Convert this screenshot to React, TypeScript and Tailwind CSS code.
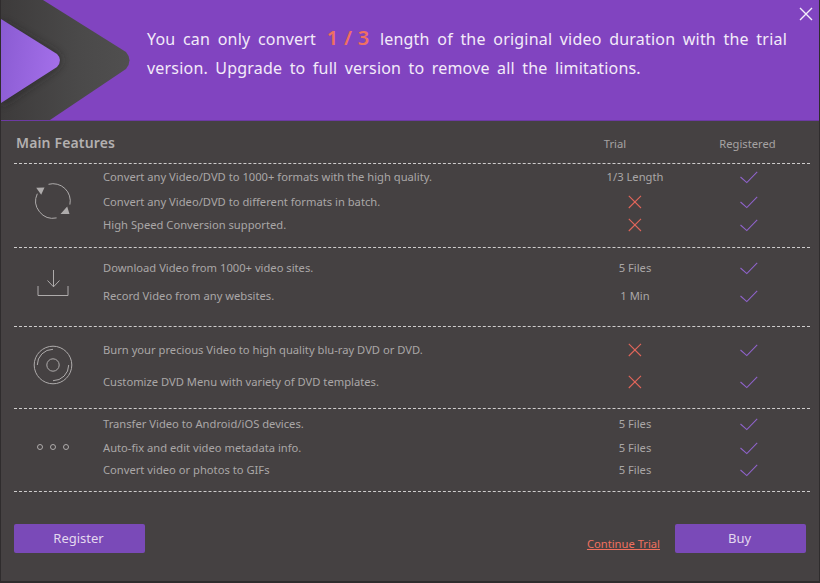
import React from "react";

const Check = () => (
  <svg width="18" height="13" viewBox="0 0 18 13" fill="none" className="block mt-[1px]">
    <path d="M0.5 6 L6.8 11.6 L17.2 0.8" stroke="#8f63cb" strokeWidth="1.1" />
  </svg>
);

const Cross = () => (
  <svg width="14" height="14" viewBox="0 0 14 14" fill="none" className="block">
    <path d="M0.8 0.8 L13 13 M13 0.8 L0.8 13" stroke="#e0655a" strokeWidth="1.1" />
  </svg>
);

const RefreshIcon = () => (
  <svg width="38" height="38" viewBox="0 0 38 38" fill="none" className="block">
    <path d="M14.5 2.3 A17.3 17.3 0 0 1 35.9 22.6 M3.3 11.7 A17.3 17.3 0 0 0 22.6 35.9" stroke="#aeabab" strokeWidth="1" />
    <path d="M2.2 5.7 L10.5 5.4 L7.2 12.7 Z M26.5 32 L35.5 32 L33.2 24.4 Z" fill="#aeabab" />
  </svg>
);

const DownloadIcon = () => (
  <svg width="32" height="27" viewBox="0 0 32 27" fill="none" className="block">
    <path d="M1 16 V25.5 H31 V16 M16.5 0 V17 M10.5 10.5 L16.5 16.8 L22.5 10.5" stroke="#aeabab" strokeWidth="1" />
  </svg>
);

const DiscIcon = () => (
  <svg width="40" height="40" viewBox="0 0 40 40" fill="none" className="block">
    <circle cx="20" cy="20" r="18.8" stroke="#aeabab" strokeWidth="1" />
    <circle cx="20" cy="20" r="6.2" stroke="#aeabab" strokeWidth="1" />
    <path d="M4.3 20 A15.7 15.7 0 0 1 20 4.3 M35.7 20 A15.7 15.7 0 0 1 20 35.7" stroke="#aeabab" strokeWidth="1" />
  </svg>
);

const DotsIcon = () => (
  <svg width="34" height="8" viewBox="0 0 34 8" fill="none" className="block">
    <circle cx="4" cy="4" r="2.5" stroke="#aeabab" strokeWidth="1" />
    <circle cx="17" cy="4" r="2.5" stroke="#aeabab" strokeWidth="1" />
    <circle cx="30" cy="4" r="2.5" stroke="#aeabab" strokeWidth="1" />
  </svg>
);

const Logo = () => (
  <svg width="131" height="120" viewBox="0 0 131 120" fill="none" className="block shrink-0">
    <defs>
      <linearGradient id="inner" x1="0" y1="0" x2="1" y2="0.2">
        <stop offset="0" stopColor="#8a5bd2" />
        <stop offset="1" stopColor="#a26ee8" />
      </linearGradient>
      <linearGradient id="plate" x1="0" y1="0" x2="1" y2="0">
        <stop offset="0" stopColor="#3d3b3b" />
        <stop offset="0.6" stopColor="#4a4949" />
        <stop offset="1" stopColor="#504f4f" />
      </linearGradient>
      <filter id="sh" x="-30%" y="-30%" width="170%" height="170%">
        <feGaussianBlur stdDeviation="5" />
      </filter>
    </defs>
    <path d="M0 0 H42 L125 52 Q132 60 125 69 L49 120 H0 Z" fill="url(#plate)" />
    <path d="M0 22 L56 54 Q62 60 56 67 L0 105 Z" fill="#222" opacity="0.7" filter="url(#sh)" />
    <path d="M0 19 L56 54 Q62 60 56 67 L0 103 Z" fill="url(#inner)" />
  </svg>
);

type Row = { h: string; text: string; trial: React.ReactNode };

const Label = ({ children }: { children: React.ReactNode }) => (
  <span className="block text-[11.2px] leading-none text-[#aaa7a7]">{children}</span>
);

const Section = ({
  icon,
  iconClass,
  heightClass,
  topClass,
  rows,
}: {
  icon: React.ReactNode;
  iconClass: string;
  heightClass: string;
  topClass: string;
  rows: Row[];
}) => (
  <div className={`flex border-b border-dashed border-[#cfcdcd] ${heightClass}`}>
    <div className={`w-[89px] shrink-0 flex justify-center items-center pr-[11px] ${iconClass}`}>{icon}</div>
    <div className={`flex-1 flex flex-col ${topClass}`}>
      {rows.map((r) => (
        <div key={r.text} className={`flex items-center ${r.h}`}>
          <div className="flex-1">
            <Label>{r.text}</Label>
          </div>
          <div className="w-[130px] flex justify-center">{r.trial}</div>
          <div className="w-[110px] pr-[12px] flex justify-center">
            <Check />
          </div>
        </div>
      ))}
    </div>
  </div>
);

export default function App() {
  return (
    <div
      className="w-[820px] h-[583px] flex flex-col bg-[#454142] border-x border-b-2 border-[#2f2c2d] relative overflow-hidden"
      style={{ fontFamily: '"Noto Sans", sans-serif' }}
    >
      <header className="h-[120px] shrink-0 bg-[#8144c0] flex border-b border-[#6d3aa3] box-content">
        <Logo />
        <p className="w-[640px] ml-[15px] mt-[23px] text-[16px] leading-[29px] text-[#f3ebf9] text-justify [word-spacing:3px] tracking-[0.2px]">
          You can only convert{" "}
          <span className="text-[20px] leading-[29px] font-semibold text-[#f0705f] mx-[3px] [word-spacing:0px]">1 / 3</span>{" "}
          length of the original video duration with the trial version. Upgrade to full version to remove all the limitations.
        </p>
      </header>
      <button className="absolute right-[6px] top-[7px]">
        <svg width="14" height="14" viewBox="0 0 14 14" fill="none" className="block">
          <path d="M1 1 L13 13 M13 1 L1 13" stroke="#f4eefa" strokeWidth="1.4" />
        </svg>
      </button>

      <main className="flex-1 flex flex-col pl-[13px] pr-[9px]">
        <div className="h-[43px] flex border-b border-dashed border-[#cfcdcd] items-center">
          <div className="flex-1 pl-[2px] text-[14px] font-semibold tracking-[0.15px] text-[#b3b0b0]">Main Features</div>
          <div className="w-[100px] text-center text-[11.2px] text-[#a6a3a3] pt-[4px] mr-[45px]">Trial</div>
          <div className="w-[75px] text-center text-[11.2px] text-[#a6a3a3] pt-[4px] mr-[25px]">Registered</div>
        </div>

        <Section
          heightClass="h-[84px]"
          topClass="pt-[1px]"
          iconClass="mb-[9px]"
          icon={<RefreshIcon />}
          rows={[
            { h: "h-[24px]", text: "Convert any Video/DVD to 1000+ formats with the high quality.", trial: <Label>1/3 Length</Label> },
            { h: "h-[26px]", text: "Convert any Video/DVD to different formats in batch.", trial: <Cross /> },
            { h: "h-[20px]", text: "High Speed Conversion supported.", trial: <Cross /> },
          ]}
        />
        <Section
          heightClass="h-[79px]"
          topClass="pt-[7px]"
          iconClass="mb-[8px]"
          icon={<DownloadIcon />}
          rows={[
            { h: "h-[26px]", text: "Download Video from 1000+ video sites.", trial: <Label>5 Files</Label> },
            { h: "h-[30px]", text: "Record Video from any websites.", trial: <Label>1 Min</Label> },
          ]}
        />
        <Section
          heightClass="h-[82px]"
          topClass="pt-[8px]"
          iconClass="mb-[5px]"
          icon={<DiscIcon />}
          rows={[
            { h: "h-[30px]", text: "Burn your precious Video to high quality blu-ray DVD or DVD.", trial: <Cross /> },
            { h: "h-[34px]", text: "Customize DVD Menu with variety of DVD templates.", trial: <Cross /> },
          ]}
        />
        <Section
          heightClass="h-[83px]"
          topClass="pt-[5px]"
          iconClass="mb-[6px]"
          icon={<DotsIcon />}
          rows={[
            { h: "h-[20px]", text: "Transfer Video to Android/iOS devices.", trial: <Label>5 Files</Label> },
            { h: "h-[28px]", text: "Auto-fix and edit video metadata info.", trial: <Label>5 Files</Label> },
            { h: "h-[16px]", text: "Convert video or photos to GIFs", trial: <Label>5 Files</Label> },
          ]}
        />

        <div className="flex items-start mt-[32px]">
          <button className="w-[131px] h-[29px] rounded-[2px] bg-[#7a4ab8] text-[13px] text-[#e3d8ef] pr-[2px]">Register</button>
          <a className="ml-auto mt-[12px] text-[11.2px] leading-[16px] text-[#f0705f] underline">Continue Trial</a>
          <button className="ml-[15px] mr-[4px] w-[131px] h-[29px] rounded-[2px] bg-[#7a4ab8] text-[13px] text-[#e3d8ef] pr-[2px]">Buy</button>
        </div>
      </main>
    </div>
  );
}
